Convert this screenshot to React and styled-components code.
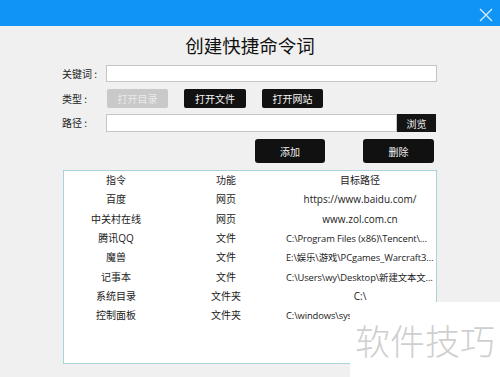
import React from 'react'
import styled, { createGlobalStyle } from 'styled-components'

const GlobalStyle = createGlobalStyle`
  html, body {
    margin: 0;
    padding: 0;
    background: #f0f0f0;
  }
  * {
    box-sizing: border-box;
  }
`

const Window = styled.div`
  position: relative;
  width: 500px;
  height: 377px;
  overflow: hidden;
  background: #f0f0f0;
  font-family: "Noto Sans CJK SC", "Noto Sans", sans-serif;
  color: #1a1a1a;
`

const TitleBar = styled.div`
  height: 26px;
  background: #1094f6;
  display: flex;
  justify-content: flex-end;
  align-items: center;
  padding-right: 7px;
`

const CloseButton = styled.div`
  width: 14px;
  height: 14px;
  display: flex;
  align-items: center;
  justify-content: center;
  margin-top: 4px;
`

const Heading = styled.h1`
  margin: 8px 0 0;
  height: 22px;
  line-height: 22px;
  font-size: 18.5px;
  font-weight: 400;
  text-align: center;
  color: #111;
`

const Form = styled.div`
  display: flex;
  flex-direction: column;
  padding-left: 62px;
  margin-top: 9px;
`

const Row = styled.div`
  display: flex;
  align-items: center;
  height: ${p => p.$h}px;
  margin-top: ${p => p.$mt || 0}px;
`

const Label = styled.div`
  width: 44px;
  font-size: 10px;
  line-height: 12px;
  color: #222;
  white-space: pre;
`

const TextBox = styled.div`
  width: ${p => p.$w}px;
  height: 100%;
  background: #fff;
  border: 1px solid #c6c6c6;
`

const TypeButton = styled.div`
  width: ${p => p.$w}px;
  height: 19px;
  margin-left: ${p => p.$ml || 0}px;
  border-radius: 2px;
  display: flex;
  align-items: center;
  justify-content: center;
  font-size: 10px;
  background: ${p => (p.$disabled ? '#c9c9c9' : '#121212')};
  color: ${p => (p.$disabled ? '#e9e9e9' : '#f4f4f4')};
`

const BrowseButton = styled.div`
  width: 39px;
  height: 100%;
  background: #141414;
  color: #eee;
  font-size: 10px;
  display: flex;
  align-items: center;
  justify-content: center;
`

const ActionButton = styled.div`
  width: ${p => p.$w}px;
  height: 24px;
  margin-left: ${p => p.$ml}px;
  border-radius: 3px;
  background: #111;
  color: #f0f0f0;
  font-size: 10px;
  display: flex;
  align-items: center;
  justify-content: center;
`

const ListBox = styled.div`
  margin: 7px 0 0 63px;
  width: 374px;
  height: 194px;
  background: #fff;
  border: 1px solid #a9d3db;
`

const ListRow = styled.div`
  display: grid;
  grid-template-columns: 104px 116px 152px;
  height: 19.3px;
  align-items: center;
  font-size: 10px;
`

const Cell = styled.div`
  text-align: ${p => (p.$long ? 'left' : 'center')};
  padding: 0 2px;
  white-space: nowrap;
  overflow: hidden;
  text-overflow: ellipsis;
  line-height: 13px;
  font-family: "Open Sans", "Noto Sans CJK SC", sans-serif;
  font-size: ${p => (p.$long ? '9.4px' : '10px')};
  letter-spacing: ${p => (p.$long ? '-0.1px' : '0')};
`

const Watermark = styled.div`
  position: absolute;
  left: 350px;
  top: 302px;
  right: 0;
  bottom: 0;
  background: #fff;
  display: flex;
  align-items: center;
  justify-content: center;
  font-size: 35px;
  font-weight: 300;
  color: #cfcfcf;
`

const rows = [
  { name: '百度', kind: '网页', path: 'https://www.baidu.com/' },
  { name: '中关村在线', kind: '网页', path: 'www.zol.com.cn' },
  { name: '腾讯QQ', kind: '文件', path: 'C:\\Program Files (x86)\\Tencent\\QQ\\Bin\\QQScLauncher.exe', long: true },
  { name: '魔兽', kind: '文件', path: 'E:\\娱乐\\游戏\\PCgames_Warcraft3\\Frozen Throne.exe', long: true },
  { name: '记事本', kind: '文件', path: 'C:\\Users\\wy\\Desktop\\新建文本文档.txt', long: true },
  { name: '系统目录', kind: '文件夹', path: 'C:\\' },
  { name: '控制面板', kind: '文件夹', path: 'C:\\windows\\system32\\control.exe', long: true }
]

const App = () => {
  return (
    <Window>
      <GlobalStyle />
      <TitleBar>
        <CloseButton>
          <svg width="14" height="14" viewBox="0 0 14 14">
            <path d="M1 1 L13 13 M13 1 L1 13" stroke="#d6ebfc" strokeWidth="1.4" fill="none" />
          </svg>
        </CloseButton>
      </TitleBar>
      <Heading>创建快捷命令词</Heading>
      <Form>
        <Row $h={17}>
          <Label>关键词 :</Label>
          <TextBox $w={331} />
        </Row>
        <Row $h={19} $mt={7}>
          <Label>类型 :</Label>
          <TypeButton $w={61} $ml={1} $disabled>打开目录</TypeButton>
          <TypeButton $w={62} $ml={16}>打开文件</TypeButton>
          <TypeButton $w={61} $ml={16}>打开网站</TypeButton>
        </Row>
        <Row $h={18} $mt={6}>
          <Label>路径 :</Label>
          <TextBox $w={291} />
          <BrowseButton>浏览</BrowseButton>
        </Row>
        <Row $h={24} $mt={7}>
          <ActionButton $w={70} $ml={193}>添加</ActionButton>
          <ActionButton $w={71} $ml={38}>删除</ActionButton>
        </Row>
      </Form>
      <ListBox>
        <ListRow>
          <Cell>指令</Cell>
          <Cell>功能</Cell>
          <Cell>目标路径</Cell>
        </ListRow>
        {rows.map(r => (
          <ListRow key={r.name}>
            <Cell>{r.name}</Cell>
            <Cell>{r.kind}</Cell>
            <Cell $long={r.long}>{r.path}</Cell>
          </ListRow>
        ))}
      </ListBox>
      <Watermark>软件技巧</Watermark>
    </Window>
  )
}

export default App
